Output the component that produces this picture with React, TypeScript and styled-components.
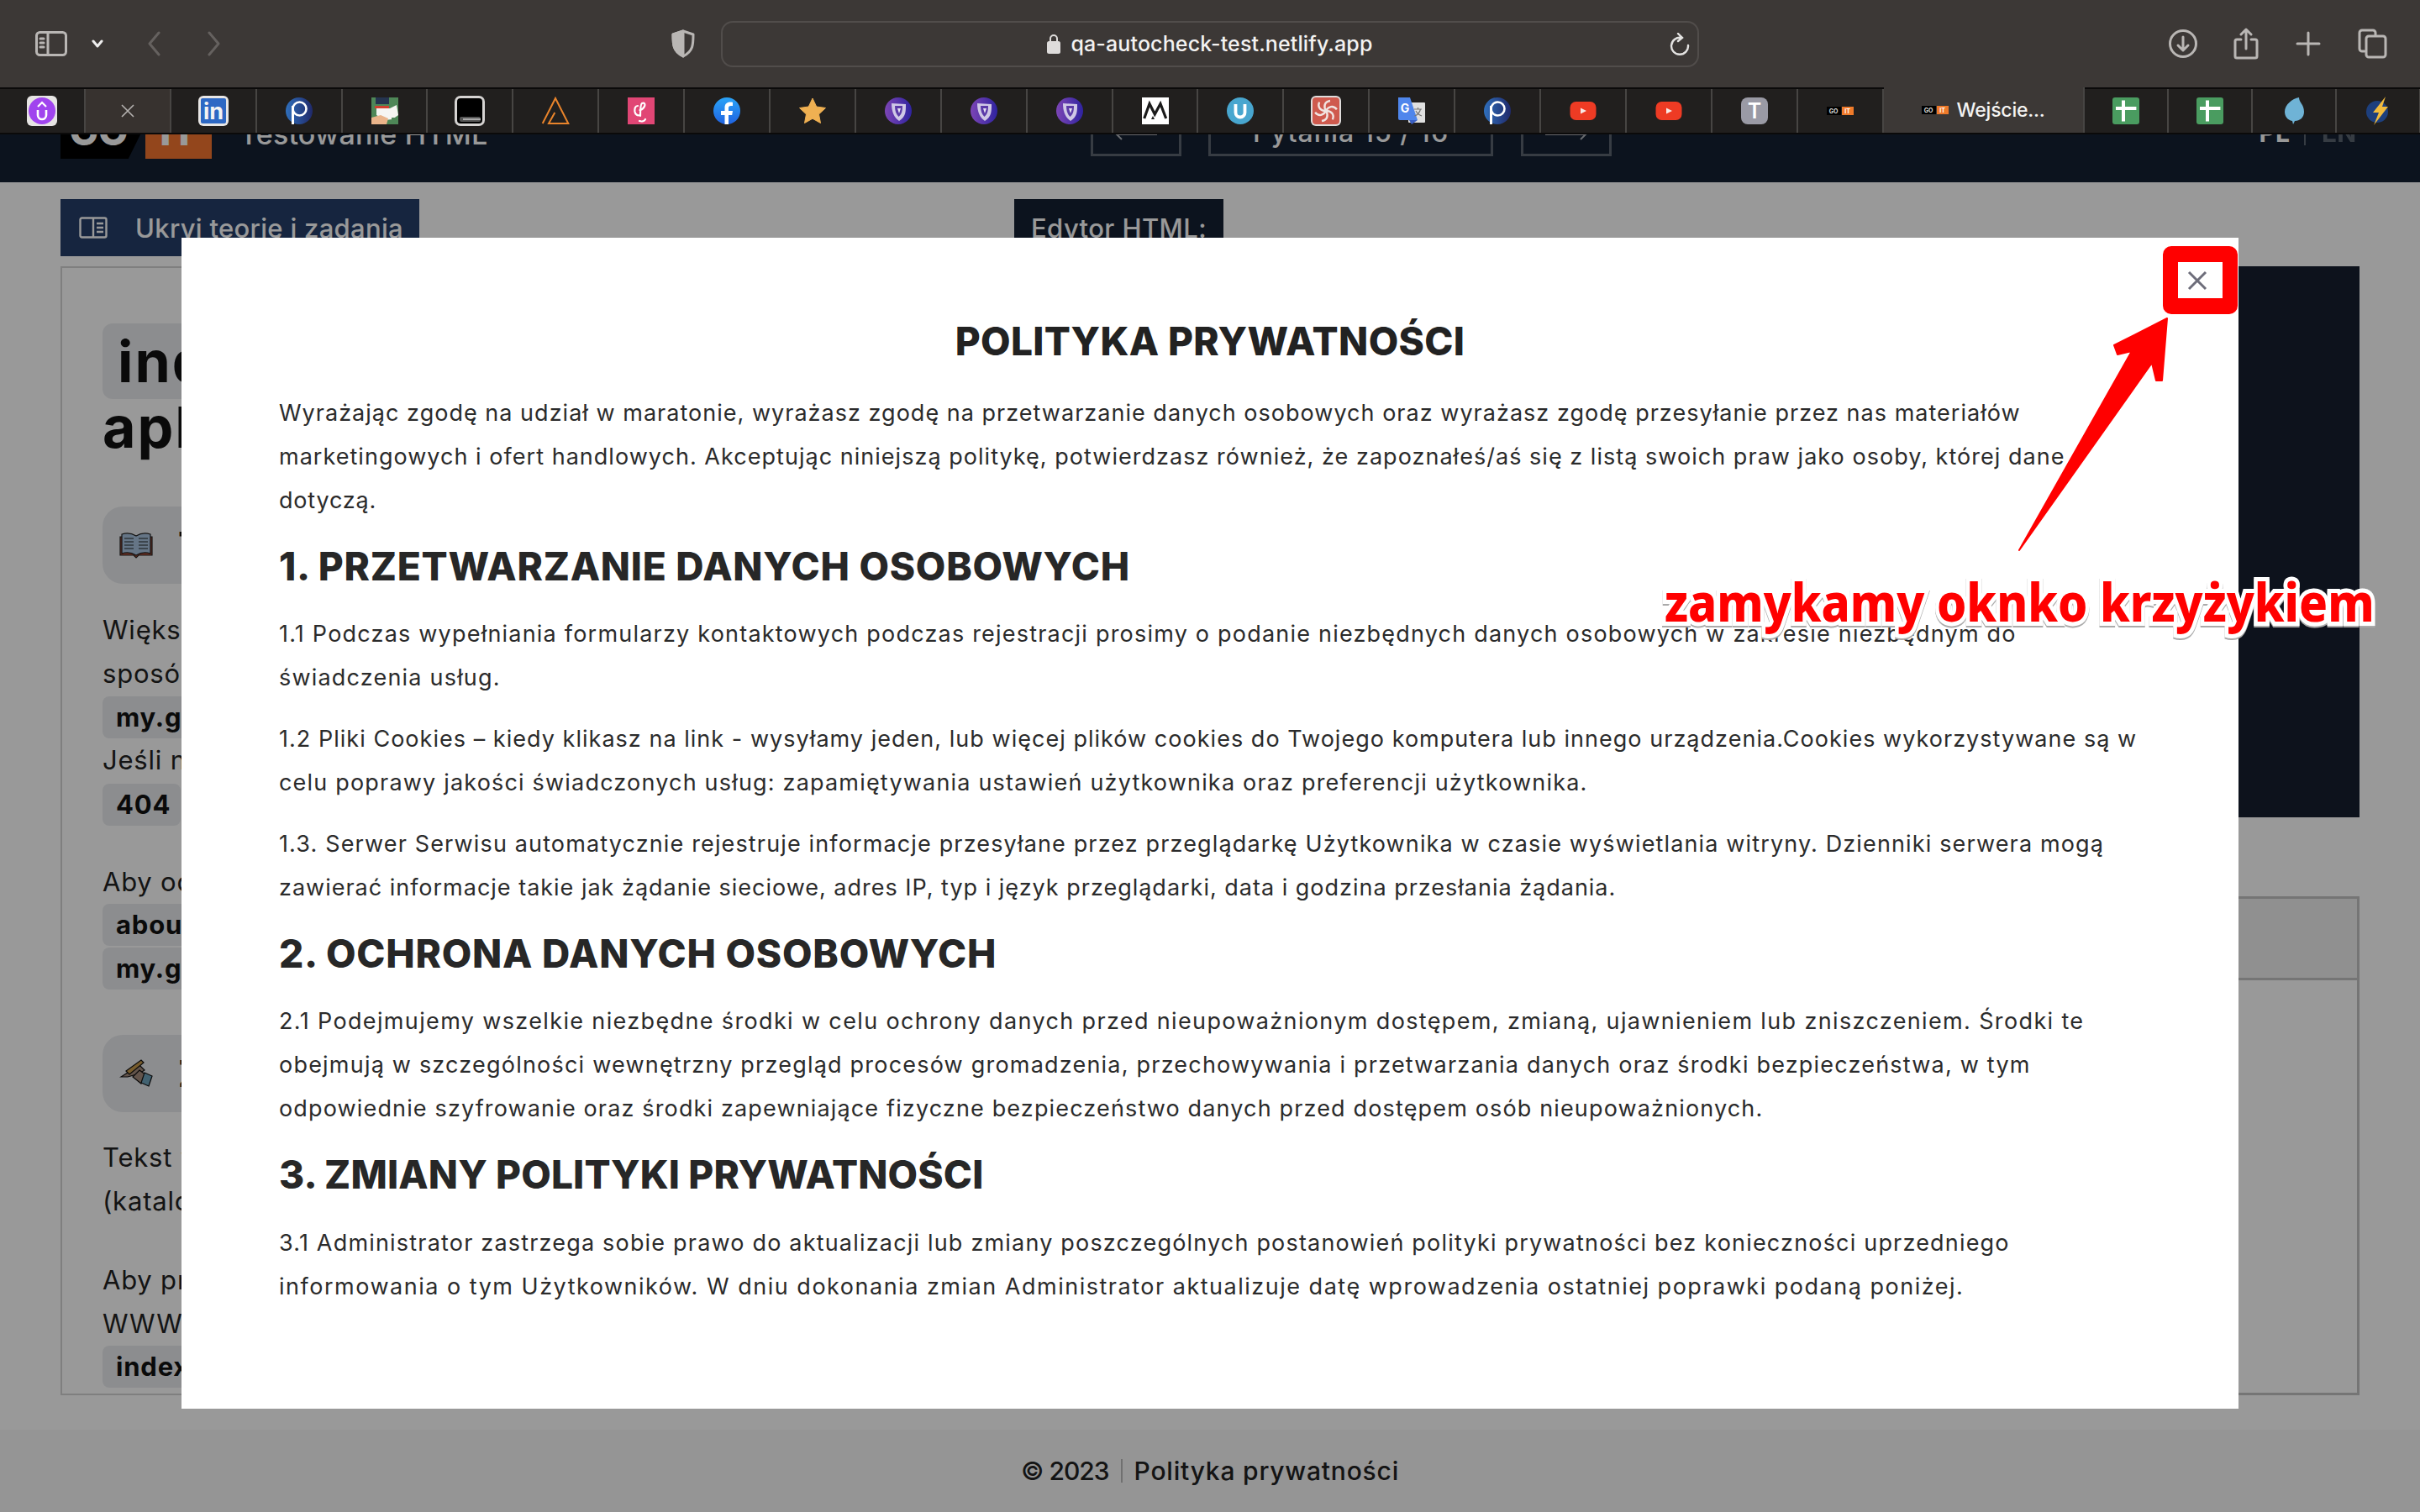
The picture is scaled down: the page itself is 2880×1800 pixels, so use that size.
import React from "react";
import styled, { createGlobalStyle } from "styled-components";

const Global = createGlobalStyle`
  html, body { margin: 0; padding: 0; width: 2880px; height: 1800px; overflow: hidden; background: #fff; }
  * { box-sizing: border-box; }
  body { font-family: Inter, "Liberation Sans", sans-serif; color: #111; }
`;

const Root = styled.div`
  position: relative; width: 2880px; height: 1800px; overflow: hidden;
  display: flex; flex-direction: column;
`;

/* ---------- browser chrome ---------- */
const Toolbar = styled.header`
  height: 104px; flex: none; background: #3c3836;
  display: flex; align-items: center; padding: 0 39px 0 42px; color: #b9b6b4;
`;
const ToolIcon = styled.svg<{ $ml?: number; $tone?: string }>`
  flex: none; margin-left: ${p => p.$ml ?? 0}px; display: block; color: ${p => p.$tone ?? "inherit"};
  fill: none; stroke: currentColor; stroke-width: 3; stroke-linecap: round; stroke-linejoin: round;
`;
const UrlField = styled.div`
  width: 1164px; height: 55px; margin-left: 31px; flex: none; position: relative;
  border: 2px solid #514d4b; border-radius: 14px;
  display: flex; align-items: center; justify-content: center; color: #f1f0ef;
  font-size: 26px; gap: 12px;
`;
const UrlText = styled.span`
  font-family: Inter, sans-serif; font-weight: 500; font-size: 25px; letter-spacing: 0.12px; color: #f3f2f1;
`;
const Reload = styled.svg`
  position: absolute; right: 9px; top: 12px; fill: none; stroke: #e4e3e2; stroke-width: 2.4; stroke-linecap: round;
`;
const ToolSpacer = styled.div`flex: 1;`;

const TabBar = styled.nav`
  height: 56px; flex: none; display: flex; background: #211f1e;
  border-top: 2px solid #0b0a0a; border-bottom: 2px solid #0b0a0a; position: relative; z-index: 3;
`;
const Tab = styled.div<{ $w?: number; $hover?: boolean; $active?: boolean }>`
  width: ${p => p.$w ?? 101.9}px; flex: none; display: flex; align-items: center; justify-content: center; gap: 10px;
  border-right: 2px solid #474543; color: #d8d6d5;
  background: ${p => (p.$active ? "#3c3836" : p.$hover ? "#37322f" : "transparent")};
  ${p => p.$active && "margin-top: -2px;"}
`;
const TabTitle = styled.span`font-size: 23px; font-weight: 500; color: #f4f3f2; letter-spacing: -0.2px;`;

const MiniLogo = styled.div`
  display: flex; gap: 1px; width: 32px; height: 10px; font-size: 7px; line-height: 1; font-weight: 700; flex: none;
`;
const MiniGo = styled.span`width: 17px; background: #000; color: #ddd; display: flex; align-items: center; justify-content: center;`;
const MiniIt = styled.span`width: 14px; background: #ef7a2a; color: #fff; display: flex; align-items: center; justify-content: center;`;

const Fav = ({ kind }: { kind: string }) => {
  const S = (c: React.ReactNode) => <svg width="36" height="36" viewBox="0 0 36 36">{c}</svg>;
  const T = (x: number, y: number, s: number, t: string, fill = "#fff", w = 700) => (
    <text x={x} y={y} fontSize={s} fill={fill} fontWeight={w} textAnchor="middle" fontFamily="Inter, sans-serif">{t}</text>
  );
  switch (kind) {
    case "ublock": return S(<>
      <rect width="36" height="36" rx="6" fill="#e6e4e3" />
      <circle cx="18" cy="18" r="16" fill="#a044ee" />
      <path d="M13 17v6a5 5 0 0 0 10 0v-6" fill="none" stroke="#fff" strokeWidth="2.6" />
      <path d="M13 13l5-5 5 5" fill="none" stroke="#fff" strokeWidth="2.2" />
    </>);
    case "x": return <svg width="16" height="16" viewBox="0 0 16 16"><path d="M1 1l14 14M15 1L1 15" stroke="#b5b2b0" strokeWidth="1.6" /></svg>;
    case "in": return S(<>
      <rect width="36" height="36" rx="6" fill="#e8e6e5" />
      <rect x="3" y="3" width="30" height="30" rx="2" fill="#2d68c4" />
      {T(18, 28, 27, "in", "#f3f3f3", 700)}
    </>);
    case "p": return S(<>
      <defs><linearGradient id="pg" x1="0" y1="0" x2="1" y2="0"><stop offset="0" stopColor="#2f6fbc" /><stop offset="1" stopColor="#20296a" /></linearGradient></defs>
      <circle cx="18" cy="18" r="16" fill="url(#pg)" />
      <circle cx="18.5" cy="15.5" r="8" fill="none" stroke="#fff" strokeWidth="2.6" />
      <path d="M10.5 12v22" stroke="#fff" strokeWidth="3" />
    </>);
    case "pic": return S(<>
      <rect x="2" y="2" width="32" height="32" fill="#4e8757" />
      <path d="M7 2h16v8H7z" fill="#25344f" /><path d="M6 12h17v3H6z" fill="#d0402f" />
      <path d="M8 15h16l8-4 2 12-7 5-9 1-10-6z" fill="#f6f5f2" />
      <path d="M2 26l11-3 9 4-2 7H2z" fill="#eab48a" />
      <path d="M26 26h6v6h-6z" fill="#4e8757" />
    </>);
    case "book": return S(<>
      <rect width="36" height="36" rx="7" fill="#d5d3d2" />
      <rect x="3" y="3" width="30" height="30" rx="4" fill="#000" />
      <rect x="6" y="25" width="25" height="6" rx="2" fill="#555" />
      <rect x="10" y="27" width="21" height="2" fill="#aaa" />
    </>);
    case "tri": return S(<path d="M2.7 33L18 3l15.3 30H10l7.3-13" fill="none" stroke="#e9842b" strokeWidth="2" />);
    case "pink": return S(<>
      <rect x="2" y="2" width="32" height="32" fill="#e14675" />
      <path d="M14 12c-3 0-4 3-3.5 7 .5 3 3 5 6 4M17 24c0-7 0-14 2-15 3-1.500 4 1 3 3.500-1 2.500-3 4-5.500 4.500M16 30c3 1 6 0 7-2" fill="none" stroke="#fff" strokeWidth="2.2" strokeLinecap="round" />
    </>);
    case "fb": return S(<>
      <defs><linearGradient id="fbg" x1="0" y1="0" x2="0" y2="1"><stop offset="0" stopColor="#2aa4f8" /><stop offset="1" stopColor="#1f62e0" /></linearGradient></defs>
      <circle cx="18" cy="18" r="16" fill="url(#fbg)" />
      <path d="M15.500 34V23H11v-5h4.500v-4c0-4.400 2.600-6.600 6.500-6.600 1.200 0 2.400.2 3 .3V12h-2.300c-2 0-2.700 1-2.700 2.400V18h5l-.8 5h-4.200v11z" fill="#fff" />
    </>);
    case "star": return S(<path d="M18 3l4.700 10 10.800 1.500-8 7.500 2 10.500-9.500-5.300-9.500 5.300 2-10.500-8-7.500L13.300 13z" fill="#efb052" stroke="#efb052" strokeWidth="1" strokeLinejoin="round" />);
    case "shield": return S(<>
      <defs><linearGradient id="shg" x1="0" y1="0" x2="1" y2="0"><stop offset="0" stopColor="#7c45b5" /><stop offset="1" stopColor="#2f23a0" /></linearGradient></defs>
      <circle cx="18" cy="18" r="16" fill="url(#shg)" />
      <path d="M10 9l17 1c0 9 0 15-8 20-6-4-9-11-9-21z" fill="#cfc8e6" />
      <path d="M14 12h9c0 6-1 10-4.500 13-3-3-4.500-7-4.500-13z" fill="#5b3aa8" />
      <path d="M17 15h4l-2 6z" fill="#e6e2f2" />
    </>);
    case "m": return S(<>
      <rect x="2" y="2" width="32" height="32" fill="#fff" />
      <path d="M4.700 27L11 9.500l6.300 12.500L24 9.500 30.700 27" fill="none" stroke="#1a1a1a" strokeWidth="3.200" />
      <path d="M13 28l2-4 2 4z" fill="#1a1a1a" />
    </>);
    case "u": return S(<>
      <circle cx="18" cy="18" r="16" fill="#48a6cf" />
      <path d="M12.500 10v10a5.500 5.500 0 0 0 11 0V10" fill="none" stroke="#fff" strokeWidth="3.800" />
    </>);
    case "sonar": return S(<>
      <rect width="36" height="36" rx="6" fill="#dfdcdb" />
      <rect x="2" y="2" width="32" height="32" rx="4" fill="#cf5a4e" />
      <g fill="none" stroke="#f1e4e1" strokeWidth="2.400">
        {[0, 60, 120, 180, 240, 300].map(a => (
          <path key={a} d="M18 18c-3-5-2-11 5-12" transform={`rotate(${a} 18 18)`} />
        ))}
      </g>
    </>);
    case "gt": return S(<>
      <rect x="14" y="8" width="20" height="24" rx="1" fill="#e0e0e0" />
      <path d="M2 2h14l9 27H4a2 2 0 0 1-2-2z" fill="#4f86ec" />
      <path d="M15 29l3 5 7-5z" fill="#3a5fc4" />
      {T(10, 20, 14, "G", "#fff", 700)}
      <path d="M21 16h9M25.500 14v2M28.500 16c-1 4-4 7-7 8M23 18c1 2 4 5 7 6" fill="none" stroke="#777" strokeWidth="1.200" />
    </>);
    case "yt": return S(<>
      <rect x="2.500" y="7" width="31" height="22" rx="7" fill="#ee3b24" />
      <path d="M15 14.500l7 3.500-7 3.500z" fill="#f8ebe8" />
    </>);
    case "t": return S(<>
      <rect x="2" y="2" width="32" height="32" rx="8" fill="#9a9aa5" />
      {T(18, 27, 25, "T", "#fff", 600)}
    </>);
    case "sheet": return S(<>
      <rect x="2" y="2" width="32" height="32" rx="3" fill="#4a9c60" />
      <path d="M6 13h24.400v4H6zM13 5.500h4v25h-4z" fill="#fff" />
    </>);
    case "drop": return S(<path d="M24 2C24 8 30 10 30 19c0 7-5 11-11 11l-2 4-1-4c-6-1-9-6-9-11 0-8 9-16 17-17z" fill="#6fb3d6" />);
    case "bolt": return S(<>
      <circle cx="17" cy="19" r="13" fill="#1d3f7d" />
      <path d="M27 1L12 20h7l-6 15 17-22h-7z" fill="#f2bb3d" />
    </>);
    default: return null;
  }
};

const tabs = ["ublock","x","in","p","pic","book","tri","pink","fb","star","shield","shield","shield","m","u","sonar","gt","p","yt","yt","t"];
const tabsAfter = ["sheet","sheet","drop","bolt"];

/* ---------- page underneath ---------- */
const Nav = styled.div`
  height: 57px; flex: none; background: #142133; color: #fff; overflow: hidden;
  display: flex; align-items: flex-end; padding: 0 76px 28px 72px;
`;
const LogoGo = styled.div`
  width: 95px; height: 90px; background: #000; flex: none; font-size: 46px; font-weight: 800; color: #fff;
  clip-path: polygon(0 0, 100% 0, 100% 68%, 85% 100%, 0 100%);
  display: flex; align-items: flex-end; justify-content: center; padding: 0 4px 10px 0; line-height: 1;
`;
const LogoIt = styled.div`
  width: 79px; height: 90px; margin-left: 6px; background: #f5752f; flex: none; font-size: 46px; font-weight: 800;
  display: flex; align-items: flex-end; justify-content: center; padding-bottom: 10px; line-height: 1; color: #fff;
`;
const NavTitle = styled.div`
  width: 1046px; padding-left: 33px; flex: none; font-size: 34px; font-weight: 500; line-height: 1; margin-bottom: 12px; letter-spacing: 0.2px; white-space: nowrap;
`;
const PagerBox = styled.div<{ $w: number; $ml?: number }>`
  width: ${p => p.$w}px; margin-left: ${p => p.$ml ?? 0}px; height: 80px; flex: none; margin-bottom: 3px;
  border: 3px solid #5d6470; display: flex; align-items: flex-end; justify-content: center;
  font-size: 32px; font-weight: 500; letter-spacing: 1px; padding-bottom: 9px; line-height: 1; white-space: nowrap;
`;
const PagerArrow = styled.svg`
  display: block; fill: none; stroke: rgba(255, 255, 255, 0.65); stroke-width: 2; margin-bottom: 7px;
`;
const Lang = styled.div`
  margin-left: auto; display: flex; align-items: flex-end; font-size: 30px; font-weight: 700; line-height: 1; margin-bottom: 16px;
`;
const LangOff = styled.span`
  opacity: .3; padding-left: 19px; margin-left: 17px; border-left: 2px solid #fff; height: 60px; display: flex; align-items: flex-end;
`;

const Main = styled.main`
  flex: 1; background: #fff; display: flex; gap: 27px; padding: 20px 72px 41px 72px; min-height: 0;
`;
const LeftCol = styled.section`width: 1108px; flex: none; display: flex; flex-direction: column; gap: 12px;`;
const RightCol = styled.section`flex: 1; display: flex; flex-direction: column; gap: 12px; min-width: 0;`;
const HideButton = styled.div`
  width: 427px; height: 68px; background: #263f6a; color: #fff; flex: none;
  display: flex; align-items: center; gap: 33px; padding-left: 22px; font-size: 31px; font-weight: 500; white-space: nowrap; letter-spacing: 0.3px;
`;
const Frame = styled.div`flex: 1; border: 2px solid #d4d4d4; padding: 66px 48px 0; overflow: hidden;`;
const TitleChip = styled.div`
  display: block; width: 760px; height: 90px; background: #eaecef; border-radius: 12px; padding-left: 18px;
  font-size: 68px; line-height: 90px; font-weight: 700; letter-spacing: 2px; white-space: nowrap;
`;
const TitleLine = styled.div`font-size: 68px; line-height: 78px; font-weight: 700; letter-spacing: 2px; margin: -6px 0 0; white-space: nowrap;`;
const SectionChip = styled.div<{ $mt: number }>`
  height: 92px; border-radius: 24px; background: #eaecef; margin-top: ${p => p.$mt}px;
  display: flex; align-items: center; gap: 30px; padding-left: 20px; font-size: 44px; font-weight: 700; white-space: nowrap;
`;
const BodyLine = styled.div<{ $mt?: number }>`
  font-size: 31px; line-height: 52px; height: 52px; letter-spacing: 0.8px; margin-top: ${p => p.$mt ?? 0}px; white-space: nowrap; color: #222;
`;
const CodeChip = styled.div<{ $mt?: number; $w?: number }>`
  height: 50px; width: ${p => p.$w ?? 400}px; margin-top: ${p => p.$mt ?? 0}px; background: #eaecef; border-radius: 8px; padding-left: 16px;
  font-size: 31px; line-height: 50px; font-weight: 700; letter-spacing: 0.8px; white-space: nowrap;
`;
const EditorLabel = styled.div`
  width: 249px; height: 68px; background: #142133; color: #fff; flex: none;
  display: flex; align-items: center; justify-content: center; font-size: 31px; font-weight: 500; letter-spacing: 0.4px;
`;
const Editor = styled.div`height: 656px; flex: none; background: #161f30; margin-bottom: 82px;`;
const Preview = styled.div`flex: 1; border: 3px solid #c3c3c3;`;
const PreviewHead = styled.div`height: 97px; background: #f0f0f0; border-bottom: 3px solid #c3c3c3;`;

const Footer = styled.footer`
  height: 98px; flex: none; background: #f8f8f8; display: flex; align-items: center; justify-content: center; gap: 14px;
  font-size: 30px; font-weight: 500; color: #222; letter-spacing: 0.8px;
`;
const FootYear = styled.span`letter-spacing: -1px;`;
const FootSep = styled.span`width: 2px; height: 28px; background: #bbb;`;

/* ---------- modal ---------- */
const Overlay = styled.div`
  position: absolute; left: 0; right: 0; top: 160px; bottom: 0; background: rgba(0, 0, 0, 0.4); z-index: 2;
`;
const Modal = styled.article`
  position: absolute; left: 216px; top: 123px; width: 2448px; height: 1394px; background: #fff;
  padding: 92px 0 0 116px; color: #2a2a2a;
`;
const ModalTitle = styled.h1`
  margin: 0 0 29px -116px; text-align: center; font-size: 46px; line-height: 62px; font-weight: 800; letter-spacing: 0.35px; color: #222; white-space: nowrap;
`;
const Heading = styled.h2<{ $ls: number; $mb?: number }>`
  margin: 22px 0 ${p => p.$mb ?? 25}px; font-size: 46px; line-height: 60px; font-weight: 800; letter-spacing: ${p => p.$ls}px; color: #272727; white-space: nowrap;
`;
const Para = styled.p<{ $mb?: number }>`
  margin: 0 0 ${p => p.$mb ?? 21}px; font-size: 27px; line-height: 52px; color: #2b2b2b;
`;
const Line = styled.span<{ $ls: number }>`
  display: block; white-space: nowrap; letter-spacing: ${p => p.$ls}px;
`;
const CloseBtn = styled.svg`
  position: absolute; left: 2387px; top: 39px; fill: none; stroke: #6d6d7a; stroke-width: 3;
`;
const RedBox = styled.div`
  position: absolute; left: 2574px; top: 293px; width: 89px; height: 81px; z-index: 5;
  border: 18px solid #ff0000; border-top-width: 19px; border-bottom-width: 19px; border-radius: 10px;
`;
const ArrowSvg = styled.svg`position: absolute; left: 2390px; top: 370px; z-index: 5;`;
const Callout = styled.div`
  position: absolute; left: 1981px; top: 674px; z-index: 6; font-family: "Noto Sans", sans-serif; font-weight: 800;
  font-size: 62px; line-height: 84px; color: #ff0000; white-space: nowrap; transform: scaleX(0.906); transform-origin: left center;
  -webkit-text-stroke: 10px #fff; paint-order: stroke fill; filter: drop-shadow(0 2px 0 #aaa);
`;

export default function App() {
  return (
    <Root>
      <Global />
      <Toolbar>
        <ToolIcon width="38" height="30" viewBox="0 0 38 30">
          <rect x="1.5" y="1.5" width="35" height="27" rx="4" />
          <path d="M15 2v26M6 9h4M6 14h4M6 19h4" />
        </ToolIcon>
        <ToolIcon $ml={29} $tone="#eee" width="14" height="10" viewBox="0 0 14 10">
          <path d="M2 2l5 6 5-6" />
        </ToolIcon>
        <ToolIcon $ml={52} $tone="#65615f" width="16" height="30" viewBox="0 0 16 30">
          <path d="M14 2L3 15l11 13" />
        </ToolIcon>
        <ToolIcon $ml={56} $tone="#65615f" width="16" height="30" viewBox="0 0 16 30">
          <path d="M2 2l11 13L2 28" />
        </ToolIcon>
        <ToolIcon $ml={536} width="28" height="34" viewBox="0 0 28 34">
          <path d="M14 2l12 4c0 12 0 20-12 26C2 26 2 18 2 6z" />
          <path d="M14 2L2 6c0 12 0 20 12 26z" fill="currentColor" />
        </ToolIcon>
        <UrlField>
          <svg width="16" height="24" viewBox="0 0 16 24"><path d="M4 10V6a4 4 0 0 1 8 0v4" fill="none" stroke="#dedcdb" strokeWidth="2" /><rect y="9" width="16" height="15" rx="2.5" fill="#dedcdb" /></svg>
          <UrlText>qa-autocheck-test.netlify.app</UrlText>
          <Reload width="24" height="28" viewBox="0 0 24 28">
            <path d="M14 6A10 10 0 1 0 22 15M10 1l5 5-5 4" />
          </Reload>
        </UrlField>
        <ToolSpacer />
        <ToolIcon width="34" height="34" viewBox="0 0 34 34">
          <circle cx="17" cy="17" r="15.5" /><path d="M17 9v16M11 19l6 6 6-6" />
        </ToolIcon>
        <ToolIcon $ml={43} width="30" height="38" viewBox="0 0 30 38">
          <path d="M9 14H4a2 2 0 0 0-2 2v18a2 2 0 0 0 2 2h22a2 2 0 0 0 2-2V16a2 2 0 0 0-2-2h-5M15 25V2M9 8l6-6 6 6" />
        </ToolIcon>
        <ToolIcon $ml={44} width="30" height="30" viewBox="0 0 30 30">
          <path d="M15 2v26M2 15h26" />
        </ToolIcon>
        <ToolIcon $ml={44} width="35" height="36" viewBox="0 0 35 36">
          <path d="M8 27H5a3 3 0 0 1-3-3V5a3 3 0 0 1 3-3h13a3 3 0 0 1 3 3v3" />
          <rect x="10" y="9" width="23" height="25" rx="3" />
        </ToolIcon>
      </Toolbar>
      <TabBar>
        {tabs.map((k, i) => (
          <Tab key={i} $hover={k === "x"}><Fav kind={k} /></Tab>
        ))}
        <Tab><MiniLogo><MiniGo>GO</MiniGo><MiniIt>IT</MiniIt></MiniLogo></Tab>
        <Tab $w={239} $active><MiniLogo><MiniGo>GO</MiniGo><MiniIt>IT</MiniIt></MiniLogo><TabTitle>Wejście...</TabTitle></Tab>
        {tabsAfter.map((k, i) => (
          <Tab key={i} $w={100}><Fav kind={k} /></Tab>
        ))}
      </TabBar>
      <Nav>
        <LogoGo>GO</LogoGo>
        <LogoIt>IT</LogoIt>
        <NavTitle>Testowanie HTML</NavTitle>
        <PagerBox $w={108}>
          <PagerArrow width="50" height="14" viewBox="0 0 50 14"><path d="M50 7H2M8 1L2 7l6 6" /></PagerArrow>
        </PagerBox>
        <PagerBox $w={339} $ml={32}>Pytania 15 / 16</PagerBox>
        <PagerBox $w={108} $ml={33}>
          <PagerArrow width="50" height="14" viewBox="0 0 50 14"><path d="M0 7h48M42 1l6 6-6 6" /></PagerArrow>
        </PagerBox>
        <Lang>PL<LangOff>EN</LangOff></Lang>
      </Nav>
      <Main>
        <LeftCol>
          <HideButton>
            <svg width="34" height="26" viewBox="0 0 34 26" fill="none" stroke="#fff" strokeWidth="2.4"><rect x="1.5" y="1.5" width="31" height="23" rx="2" /><path d="M17 2v22M21 8h8M21 13h8M21 18h8" /></svg>
            Ukryj teorię i zadania
          </HideButton>
          <Frame>
            <TitleChip>index.html</TitleChip>
            <TitleLine>aplikacji</TitleLine>
            <SectionChip $mt={56}>
              <svg width="40" height="32" viewBox="0 0 40 32">
                <path d="M1 6v22h16l3 3 3-3h16V6z" fill="#b5503a" stroke="#222" strokeWidth="1.2" />
                <path d="M3 3c6-2 12-1 17 2 5-3 11-4 17-2v23c-6-2-12-1-17 2-5-3-11-4-17-2z" fill="#a9c4df" stroke="#222" strokeWidth="1.2" />
                <path d="M6 8h11M6 12h11M6 16h11M6 20h11M23 8h11M23 12h11M23 16h11M23 20h11" stroke="#222" strokeWidth="1.2" />
              </svg>
              Teoria
            </SectionChip>
            <BodyLine $mt={29}>Większość stron internetowych</BodyLine>
            <BodyLine>sposób</BodyLine>
            <CodeChip $mt={1}>my.github.io</CodeChip>
            <BodyLine>Jeśli nie</BodyLine>
            <CodeChip $mt={2} $w={93}>404</CodeChip>
            <BodyLine $mt={41}>Aby odwiedzić</BodyLine>
            <CodeChip>about.html</CodeChip>
            <CodeChip $mt={2}>my.github.io</CodeChip>
            <SectionChip $mt={54}>
              <svg width="40" height="36" viewBox="0 0 40 36">
                <path d="M2 22L24 8l6 6-6 4-14 4z" fill="#a58d7d" stroke="#111" strokeWidth="1.2" />
                <path d="M8 15L26 2l3 3L12 19z" fill="#c79a4c" stroke="#111" strokeWidth="1.2" />
                <path d="M24 14l8 6-6 10-10-8z" fill="#a58d7d" stroke="#111" strokeWidth="1.2" />
                <path d="M30 17l9 4-4 12-9-4z" fill="#6fa3bd" stroke="#111" strokeWidth="1.2" />
              </svg>
              Zadanie
            </SectionChip>
            <BodyLine $mt={28}>Tekst w pliku</BodyLine>
            <BodyLine>(katalog)</BodyLine>
            <BodyLine $mt={42}>Aby przejść</BodyLine>
            <BodyLine>WWW</BodyLine>
            <CodeChip>index.html</CodeChip>
          </Frame>
        </LeftCol>
        <RightCol>
          <EditorLabel>Edytor HTML:</EditorLabel>
          <Editor />
          <Preview><PreviewHead /></Preview>
        </RightCol>
      </Main>
      <Footer><FootYear>© 2023</FootYear><FootSep />Polityka prywatności</Footer>
      <Overlay>
        <Modal>
          <CloseBtn width="24" height="24" viewBox="0 0 24 24"><path d="M2 2l20 20M22 2L2 22" /></CloseBtn>
          <ModalTitle>POLITYKA PRYWATNOŚCI</ModalTitle>
          <Para $mb={0}>
            <Line $ls={1.02}>Wyrażając zgodę na udział w maratonie, wyrażasz zgodę na przetwarzanie danych osobowych oraz wyrażasz zgodę przesyłanie przez nas materiałów</Line>
            <Line $ls={1.03}>marketingowych i ofert handlowych. Akceptując niniejszą politykę, potwierdzasz również, że zapoznałeś/aś się z listą swoich praw jako osoby, której dane</Line>
            <Line $ls={0.8}>dotyczą.</Line>
          </Para>
          <Heading $ls={0.75}>1. PRZETWARZANIE DANYCH OSOBOWYCH</Heading>
          <Para>
            <Line $ls={1.21}>1.1 Podczas wypełniania formularzy kontaktowych podczas rejestracji prosimy o podanie niezbędnych danych osobowych w zakresie niezbędnym do</Line>
            <Line $ls={1.2}>świadczenia usług.</Line>
          </Para>
          <Para>
            <Line $ls={1.03}>1.2 Pliki Cookies – kiedy klikasz na link - wysyłamy jeden, lub więcej plików cookies do Twojego komputera lub innego urządzenia.Cookies wykorzystywane są w</Line>
            <Line $ls={1.19}>celu poprawy jakości świadczonych usług: zapamiętywania ustawień użytkownika oraz preferencji użytkownika.</Line>
          </Para>
          <Para $mb={0}>
            <Line $ls={1.14}>1.3. Serwer Serwisu automatycznie rejestruje informacje przesyłane przez przeglądarkę Użytkownika w czasie wyświetlania witryny. Dzienniki serwera mogą</Line>
            <Line $ls={0.99}>zawierać informacje takie jak żądanie sieciowe, adres IP, typ i język przeglądarki, data i godzina przesłania żądania.</Line>
          </Para>
          <Heading $ls={0.78}>2. OCHRONA DANYCH OSOBOWYCH</Heading>
          <Para $mb={0}>
            <Line $ls={1.36}>2.1 Podejmujemy wszelkie niezbędne środki w celu ochrony danych przed nieupoważnionym dostępem, zmianą, ujawnieniem lub zniszczeniem. Środki te</Line>
            <Line $ls={1.21}>obejmują w szczególności wewnętrzny przegląd procesów gromadzenia, przechowywania i przetwarzania danych oraz środki bezpieczeństwa, w tym</Line>
            <Line $ls={1.15}>odpowiednie szyfrowanie oraz środki zapewniające fizyczne bezpieczeństwo danych przed dostępem osób nieupoważnionych.</Line>
          </Para>
          <Heading $ls={0.15} $mb={26}>3. ZMIANY POLITYKI PRYWATNOŚCI</Heading>
          <Para>
            <Line $ls={1.19}>3.1 Administrator zastrzega sobie prawo do aktualizacji lub zmiany poszczególnych postanowień polityki prywatności bez konieczności uprzedniego</Line>
            <Line $ls={1.51}>informowania o tym Użytkowników. W dniu dokonania zmian Administrator aktualizuje datę wprowadzenia ostatniej poprawki podaną poniżej.</Line>
          </Para>
        </Modal>
      </Overlay>
      <RedBox />
      <ArrowSvg width="200" height="300" viewBox="0 0 200 300">
        <path d="M13 285L147 48 130 52 126 41 189 9 183 83 176 83 171 62 z" fill="#ff0000" stroke="#ff0000" strokeWidth="2" strokeLinejoin="round" />
      </ArrowSvg>
      <Callout>zamykamy oknko krzyżykiem</Callout>
    </Root>
  );
}
